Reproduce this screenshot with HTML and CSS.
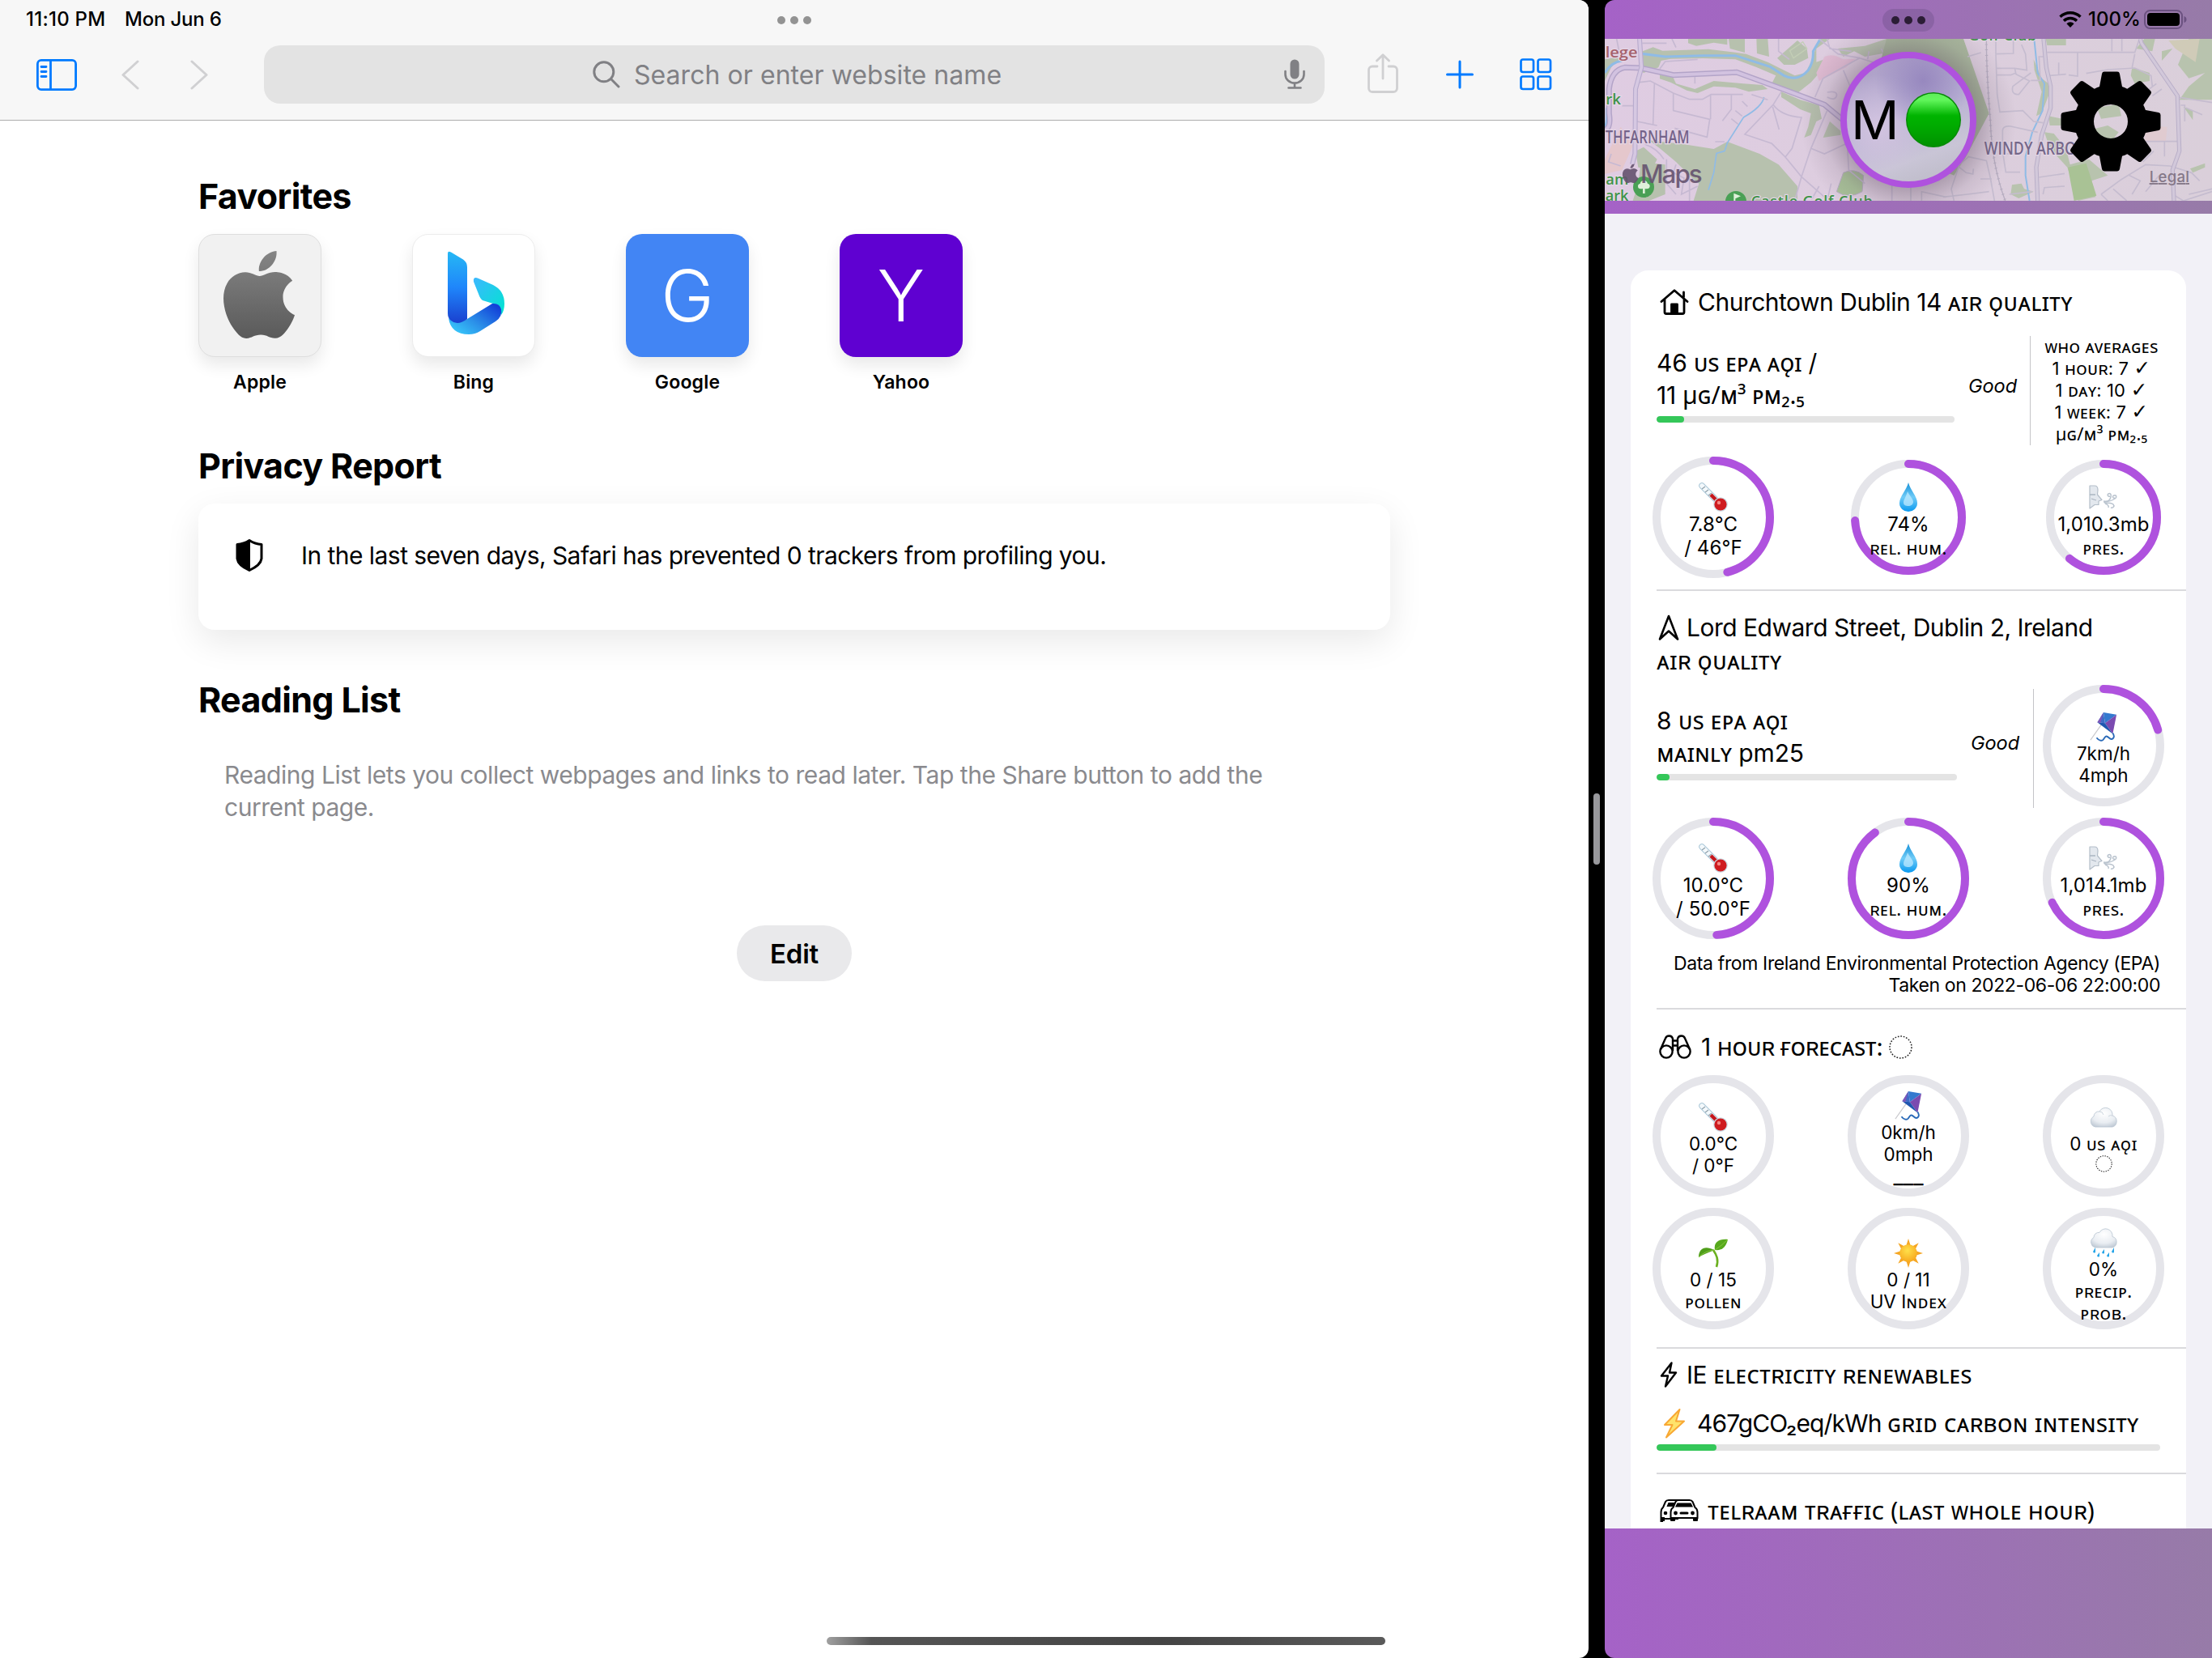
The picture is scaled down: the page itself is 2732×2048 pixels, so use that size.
FILE: index.html
```html
<!DOCTYPE html>
<html lang="en">
<head>
<meta charset="utf-8">
<title>Start Page</title>
<link rel="stylesheet" href="styles.css">
</head>
<body>
<svg class="defs" aria-hidden="true">
  <defs>
    <linearGradient id="appleGrey" x1="0" y1="0" x2="0" y2="1"><stop offset="0" stop-color="#858585"/><stop offset="1" stop-color="#5a5a5a"/></linearGradient>
    <linearGradient id="bingStem" x1="0" y1="0" x2="0" y2="1"><stop offset="0" stop-color="#26b8f4"/><stop offset=".5" stop-color="#1f86fb"/><stop offset="1" stop-color="#1a40cf"/></linearGradient>
    <linearGradient id="bingBase" x1="0" y1="1" x2="1" y2="0.2"><stop offset="0" stop-color="#3bd6ff"/><stop offset=".5" stop-color="#2b8fe8"/><stop offset="1" stop-color="#1240d8"/></linearGradient>
    <linearGradient id="bingTop" x1="0" y1="0" x2="1" y2="1"><stop offset="0" stop-color="#3cb8ff"/><stop offset="1" stop-color="#00e5cf"/></linearGradient>
    <linearGradient id="dropFill" x1="0" y1="0" x2="0" y2="1"><stop offset="0" stop-color="#1590d8"/><stop offset=".5" stop-color="#6fcbf7"/><stop offset="1" stop-color="#0a9af0"/></linearGradient>
    <radialGradient id="sunFill" cx=".45" cy=".35" r=".7"><stop offset="0" stop-color="#ffe04a"/><stop offset="1" stop-color="#f7a51c"/></radialGradient>
    <radialGradient id="cloudFill" cx=".5" cy=".3" r=".8"><stop offset="0" stop-color="#ffffff"/><stop offset=".6" stop-color="#e9edf2"/><stop offset="1" stop-color="#b9c4d0"/></radialGradient>
    <linearGradient id="greenBall" x1="0" y1="0" x2="0" y2="1"><stop offset="0" stop-color="#5fee5a"/><stop offset=".12" stop-color="#62f75c"/><stop offset=".42" stop-color="#00b400"/><stop offset=".6" stop-color="#00ac00"/><stop offset="1" stop-color="#009200"/></linearGradient>
    <linearGradient id="mapBase" x1="0" y1="0" x2="1" y2="0"><stop offset="0" stop-color="#dfcce2"/><stop offset="1" stop-color="#dacfda"/></linearGradient>
    <radialGradient id="pinShade"><stop offset=".62" stop-color="#5b4a5e" stop-opacity=".36"/><stop offset=".8" stop-color="#5b4a5e" stop-opacity=".12"/><stop offset="1" stop-color="#5b4a5e" stop-opacity="0"/></radialGradient>
  </defs>
  <symbol id="apple" viewBox="0 0 24 24"><path d="M12.152 6.896c-.948 0-2.415-1.078-3.96-1.04-2.04.027-3.91 1.183-4.961 3.014-2.117 3.675-.546 9.103 1.519 12.09 1.013 1.454 2.208 3.09 3.792 3.039 1.52-.065 2.09-.987 3.935-.987 1.831 0 2.35.987 3.96.948 1.637-.026 2.676-1.48 3.676-2.948 1.156-1.688 1.636-3.325 1.662-3.415-.039-.013-3.182-1.221-3.22-4.857-.026-3.04 2.48-4.494 2.597-4.559-1.429-2.09-3.623-2.324-4.39-2.376-2-.156-3.675 1.09-4.61 1.09zM15.53 3.83c.843-1.012 1.4-2.427 1.245-3.83-1.207.052-2.662.805-3.532 1.818-.78.896-1.454 2.338-1.273 3.714 1.338.104 2.715-.688 3.559-1.701"/></symbol>
  <symbol id="thermometer" viewBox="0 0 36 36">
    <path d="M4 4L20 20" stroke="#a9c7d8" stroke-width="7.5" stroke-linecap="round"/>
    <path d="M4 4L20 20" stroke="#f3f8fb" stroke-width="5.5" stroke-linecap="round"/>
    <path d="M4 8l4-3M8 12l4-3M12 16l4-3" stroke="#8fa0aa" stroke-width="1.2"/>
    <path d="M15 15L26 26" stroke="#c4161c" stroke-width="4.500"/>
    <circle cx="27" cy="27" r="8.800" fill="#c9d9e2"/><circle cx="27" cy="27" r="7.600" fill="#cf1c20"/><circle cx="25" cy="25" r="2.2" fill="#f58a86"/>
  </symbol>
  <symbol id="drop" viewBox="0 0 36 36"><path d="M18 0C20 9 29 17 29 25.500A11 10.500 0 0 1 7 25.500C7 17 16 9 18 0Z" fill="url(#dropFill)"/><path d="M17 11C15 18 12 21 12 25c0 3 3 4 6 4s6-2 6-5c0-4-5-8-7-13Z" fill="#bfeaff" opacity=".75"/></symbol>
  <symbol id="wind" viewBox="0 0 36 36">
    <path d="M1 4h6c3 0 4 2 4 5 0 2-.5 4-.5 6L16 21.500l-4 1.500V27.500H7L1 32Z" fill="#e3e8ee" stroke="#b4bec9" stroke-width="1.200" stroke-linejoin="round"/>
    <path d="M1 15h7M3 20l6 2" stroke="#aab5c1" stroke-width="1.300"/>
    <path d="M18 23c6 1 8-1 9-5s-1-5-3-4 0 4 2 3M18 24c8 0 11-2 14-4s2-5-1-4-1 4 1 3M19 25c6 0 9 0 11 2s0 5-3 4M20 26c3 1 5 3 4 5" fill="none" stroke="#b9c3ce" stroke-width="1.500"/>
  </symbol>
  <symbol id="kite" viewBox="0 0 36 38">
    <path d="M18 12L1 36" stroke="#c8c8cc" stroke-width="1.200"/>
    <path d="M18 0L35 3L20 14Z" fill="#3479cf"/><path d="M18 0L10 13L20 14Z" fill="#3f6bc7"/><path d="M35 3L30 28L20 14Z" fill="#7b4ab0"/><path d="M10 13L30 28L20 14Z" fill="#1f56b0"/><path d="M18 0L10 13L14 14Z" fill="#7f57b8"/>
    <path d="M30 27c4 6-1 10-5 6s-5-1-7 2-6 2-9-2" fill="none" stroke="#2a6ab8" stroke-width="2"/>
  </symbol>
  <symbol id="cloud" viewBox="0 0 36 26"><path d="M8 25a7 7 0 0 1-2-13 6 6 0 0 1 7-6 8.500 8.500 0 0 1 16 5 7.300 7.300 0 0 1 0 14Z" fill="url(#cloudFill)" stroke="#b8c4d0" stroke-width=".8"/><path d="M13 6q4 0 5 4M29 11q-3-1-5 1" stroke="#ccd5de" fill="none"/></symbol>
  <symbol id="seedling" viewBox="0 0 36 36"><path d="M22 35C25 26 22 20 18 14" stroke="#6bb01f" stroke-width="2.600" fill="none"/><path d="M0 23C0 12 8 8 19 14C14 17 8 18 0 23Z" fill="#4f9e1a"/><path d="M20 14C18 4 26 0 36 1C34 10 29 15 20 14Z" fill="#57a91d"/><path d="M20 14Q28 9 36 1M0 23Q8 15 19 14" stroke="#86c63c" fill="none"/></symbol>
  <symbol id="sun" viewBox="0 0 36 36"><path d="M18 0l2.500 8h-5ZM18 36l2.500-8h-5ZM0 18l8-2.500v5ZM36 18l-8-2.500v5ZM5.300 5.300l7.400 3.900-3.500 3.500ZM30.700 5.300l-7.400 3.900 3.500 3.500ZM5.300 30.700l7.400-3.900-3.500-3.500ZM30.700 30.700l-7.400-3.900 3.500-3.500Z" fill="#f5a623"/><circle cx="18" cy="18" r="10.800" fill="url(#sunFill)"/></symbol>
  <symbol id="rain" viewBox="0 0 36 36"><path d="M8 24a6.800 6.800 0 0 1-2-12.500 6 6 0 0 1 7-6 8.500 8.500 0 0 1 16 5 7 7 0 0 1 0 13.500Z" fill="url(#cloudFill)" stroke="#b8c4d0" stroke-width=".8"/><path d="M8 24l-3 5a2 2 0 0 0 3 1ZM19 26l-3 4a2 2 0 0 0 3 1ZM31 24l-3 5a2 2 0 0 0 3 1ZM13 30l-3 4a2 2 0 0 0 3 1ZM25 30l-3 4a2 2 0 0 0 3 1Z" fill="#27a5e8"/></symbol>
</svg>

<div class="screen">
  <main class="safari">
    <header class="chrome">
      <div class="status">
        <span class="time">11:10 PM</span><span class="date">Mon Jun 6</span>
        <span class="dots"><i></i><i></i><i></i></span>
      </div>
      <div class="toolbar">
        <svg class="i-sidebar" width="50" height="39" viewBox="0 0 50 39" fill="none" stroke="#007aff" stroke-width="2.800"><rect x="1.400" y="1.400" width="47.200" height="36.200" rx="4.500"/><path d="M17.500 2v35M6 9.500h6M6 15.500h6M6 21.500h6" stroke-linecap="round"/></svg>
        <svg class="i-back" width="22" height="37" viewBox="0 0 22 37" fill="none" stroke="#d0d0d2" stroke-width="3" stroke-linecap="round" stroke-linejoin="round"><path d="M20 2L2 18.500L20 35"/></svg>
        <svg class="i-fwd" width="22" height="37" viewBox="0 0 22 37" fill="none" stroke="#d0d0d2" stroke-width="3" stroke-linecap="round" stroke-linejoin="round"><path d="M2 2L20 18.500L2 35"/></svg>
        <div class="search">
          <svg width="34" height="34" viewBox="0 0 34 34" fill="none" stroke="#808084" stroke-width="3" stroke-linecap="round"><circle cx="13.800" cy="13.800" r="12"/><path d="M22.800 22.800L32 32"/></svg>
          <span class="placeholder">Search or enter website name</span>
          <svg class="mic" width="26" height="37" viewBox="0 0 26 37" fill="none" stroke="#808084" stroke-width="2.600" stroke-linecap="round"><rect x="7.500" y=".5" width="11" height="24" rx="5.500" fill="#808084" stroke="none"/><path d="M1.500 15v4a11.500 10.500 0 0 0 23 0v-4M13 30v5M5.500 35.500h15"/></svg>
        </div>
        <svg class="i-share" width="38" height="50" viewBox="0 0 38 50" fill="none" stroke="#d0d0d2" stroke-width="2.800" stroke-linecap="round" stroke-linejoin="round"><path d="M12 16H6a4.500 4.500 0 0 0-4.500 4.500V43A4.500 4.500 0 0 0 6 47.500H32A4.500 4.500 0 0 0 36.500 43V20.500A4.500 4.500 0 0 0 32 16H26M19 31V2M11.500 9L19 1.800L26.500 9"/></svg>
        <svg class="i-plus" width="34" height="36" viewBox="0 0 34 36" stroke="#007aff" stroke-width="3" stroke-linecap="round"><path d="M17 2v32M1.500 18h31"/></svg>
        <svg class="i-grid" width="40" height="40" viewBox="0 0 40 40" fill="none" stroke="#007aff" stroke-width="2.700"><rect x="1.500" y="1.500" width="15.500" height="15.500" rx="2.500"/><rect x="22.500" y="1.500" width="15.500" height="15.500" rx="2.500"/><rect x="1.500" y="22.500" width="15.500" height="15.500" rx="2.500"/><rect x="22.500" y="22.500" width="15.500" height="15.500" rx="2.500"/></svg>
      </div>
    </header>

    <section class="start">
      <h2>Favorites</h2>
      <div class="tiles">
        <div class="tile"><div class="face face-apple"><svg width="108" height="108" fill="url(#appleGrey)"><use href="#apple"/></svg></div><span>Apple</span></div>
        <div class="tile"><div class="face face-bing"><svg width="152" height="152" viewBox="0 0 152 152"><path d="M76 59Q75 52 82 55L100 63Q114 70 114 86Q114 95 110 100Q111 90 100 86L87 82Q84 80 82 74Z" fill="url(#bingTop)"/><path d="M45 104Q48 124 70 124Q78 124 84 120L103 108Q112 102 110 93Q108 85 99 86L68 105Q56 112 45 104Z" fill="url(#bingBase)"/><path d="M44 24Q44 20.500 48 22.500L63 31.500Q68 35 68 41V105Q56 114 48 107Q44 104 44 98Z" fill="url(#bingStem)"/></svg></div><span>Bing</span></div>
        <div class="tile"><div class="face face-google">G</div><span>Google</span></div>
        <div class="tile"><div class="face face-yahoo">Y</div><span>Yahoo</span></div>
      </div>
      <h2 class="h-privacy">Privacy Report</h2>
      <div class="privacy">
        <svg width="34" height="40" viewBox="0 0 34 40"><path d="M17 1.500Q24 6 32 6.500V24Q31 32 17 38.500Q3 32 2 24V6.500Q10 6 17 1.500Z" fill="#fff" stroke="#000" stroke-width="3" stroke-linejoin="round"/><path d="M18 1.500Q10 6 2 6.500V24Q3 32 18 38.500Z"/></svg>
        <p>In the last seven days, Safari has prevented 0 trackers from profiling you.</p>
      </div>
      <h2 class="h-reading">Reading List</h2>
      <p class="reading">Reading List lets you collect webpages and links to read later. Tap the Share button to add the<br>current page.</p>
      <button class="edit">Edit</button>
    </section>
  </main>

  <div class="divider"><i></i></div>

  <aside class="app">
    <div class="bar">
      <span class="pill"><i></i><i></i><i></i></span>
      <svg class="wifi" width="28" height="20" viewBox="0 0 28 20" fill="none" stroke="#000" stroke-width="3.400"><path d="M1.500 6.800a18 18 0 0 1 25 0M6 11.800a11.500 11.500 0 0 1 16 0"/><path d="M14 20l-4.600-4.800a6.500 6.500 0 0 1 9.200 0Z" fill="#000" stroke="none"/></svg>
      <span class="pct">100%</span>
      <svg class="battery" width="53" height="24" viewBox="0 0 53 24"><rect x="1" y="1" width="46" height="22" rx="6.500" fill="none" stroke="#6b5180" stroke-width="2"/><rect x="4" y="4" width="40" height="16" rx="4"/><path d="M49.500 8v8q3-1 3-4t-3-4Z" fill="#6b5180"/></svg>
    </div>

    <div class="map">
      <svg class="tilemap" width="750" height="200" viewBox="0 0 2250 600" font-family="'Open Sans', 'Noto Sans', sans-serif">
        <rect width="2250" height="600" fill="url(#mapBase)"/>
        <g transform="translate(-36,-24)">
          <g fill="#b7c1ae">
            <path d="M36 100L80 92L100 90L60 130L36 180ZM170 72L215 55L250 68L420 62L520 74L560 80L640 110L700 140L740 160L780 150L800 110L830 24H870L820 60V110L850 100L840 140L800 185L750 225L655 190L670 160L600 130L520 100L400 96L280 98L245 105L235 130L180 150L165 140Z"/>
            <path d="M240 150L290 168L300 190L370 210L440 180L550 190L620 195L640 210L570 220L520 205L440 200L380 225L340 215L280 185L240 172ZM690 220L760 250L830 270L840 320L820 330L800 380L775 390L790 350L800 300L760 285L690 240Z"/>
            <path d="M495 24H555V75L500 60ZM598 24H640L645 90L600 78ZM345 24H490V46L440 38L375 50L345 40ZM675 95L750 30L785 60L790 95L740 120L700 120Z"/>
            <path d="M200 400L330 415L440 432L490 405L610 450L680 490L750 570V624H365L385 560L360 540L300 480L240 430ZM150 440L180 425L230 470L210 510L160 500ZM900 60L1000 50L1080 24H1170V60L1000 90L960 70L920 90ZM845 390L870 330L910 365V380ZM170 480L260 490V600L200 624H140L160 560Z"/>
          </g>
          <path d="M895 590L920 520Q960 500 995 530L990 590Q940 620 895 590Z" fill="#a9c299" stroke="#b9aec6" stroke-width="3"/>
          <path d="M820 150L850 90Q880 75 920 100L965 98L930 130L830 180Z" fill="#e0bcd3"/>
          <path d="M95 350L140 420L100 510L36 525V470Z" fill="#e5c7cc"/>
          <path d="M722 68L770 35L785 60L735 95Z" fill="none" stroke="#c3ceb6" stroke-width="4"/>
          <g fill="none" stroke="#8fbbe6" stroke-width="9"><path d="M165 78L260 90L400 86H520L650 128L700 160Q750 185 790 140Q810 110 808 70L835 24"/><path d="M36 150Q60 110 100 105M44 280V310Q44 340 36 350"/></g>
          <path d="M626 240Q620 275 550 315L490 410L480 440L450 448L440 520L420 584" fill="none" stroke="#8fbbe6" stroke-width="5"/>
          <g fill="none" stroke="#c6b9d2" stroke-width="5">
            <path d="M165 185L205 180L290 225L350 248H398L430 230H548M220 190L215 340M290 225V290L425 322L415 388L295 355M428 230V322M505 230V285L472 328M370 160V190M155 330L230 345M100 272H150"/>
            <path d="M690 220L660 268L555 378L655 412L705 462L765 535L850 610M660 268Q690 310 765 315L730 430L705 462M658 275L682 360M845 170L815 240M860 290L800 430L765 535L740 624M800 430L850 450L935 410M845 170L980 95L1060 120M920 140L945 200M875 560L860 624M860 222Q900 215 895 235T860 240M1100 560V624"/>
            <path d="M830 24L900 80L980 95M175 40H265M80 24L90 75M285 24L300 56M680 24V70L720 100M580 230L640 250M545 255L565 275M520 290L545 310M505 320L530 340M445 405H480M60 450L50 480L95 495M265 470V560L300 600M300 490L290 520L330 540L320 600L380 570M350 530V624M185 415Q230 430 255 470M240 135L260 108L380 100M1015 70L1010 100M1060 60L1080 100M860 24L870 60L950 70M935 420L940 510L1000 560M800 624L830 570"/>
          </g>
          <g fill="none"><path d="M40 360Q60 350 52 300V210Q60 140 110 130L170 132L290 158L525 148L690 208L850 268L925 330" stroke="#b3a4c8" stroke-width="21"/><path d="M40 360Q60 350 52 300V210Q60 140 110 130L170 132L290 158L525 148L690 208L850 268L925 330" stroke="#d2c2e0" stroke-width="12"/>
          <path d="M165 24L172 130L150 210L148 450L138 490" stroke="#b9acce" stroke-width="18"/><path d="M165 24L172 130L150 210L148 450L138 490" stroke="#d6c8e2" stroke-width="11"/></g>
          <g fill="#4aa055"><circle cx="180" cy="573" r="39"/><circle cx="522" cy="627" r="39"/></g>
          <path d="M177 597v-18q-18 4-18-9 0-8 8-9 2-12 14-12t14 11q9 2 8 10-1 12-18 9v18Z" fill="#dff0da"/><path d="M514 630v-34l26 11-20 9v14Z" fill="#dff0da"/>
        </g>
        <g transform="translate(1104,-24)">
          <path d="M0 24H225L320 300L235 460L190 530L120 500L60 300L-80 100L-60 24Z" fill="#aab99e"/>
          <g fill="#b8c3ae"><path d="M530 24H605V48H535ZM485 100L515 170L540 190V235L515 300L495 310L515 220L488 140ZM895 24H935L925 70L865 60ZM850 130L915 150V180L860 190L845 160ZM1060 24H1146V250H1025L1060 200L1120 150L1060 170L1020 120ZM960 70L1000 60L960 105ZM720 280L800 265L810 310L735 320ZM700 360L760 345L800 370L780 395H710ZM525 370L560 375L605 430L620 490L690 470L760 530L700 550L715 610L650 624L610 500L545 430ZM405 565L440 560L450 580L485 590L430 615L400 600ZM1065 505L1120 485V500L1075 520ZM540 310L590 320V345H545ZM1040 275L1075 290V325Z"/></g>
          <path d="M985 30L1100 24L1085 110L1010 60Z" fill="#d0cbb8"/><path d="M900 345L980 350L975 403H895Z" fill="#e0cbd0"/><path d="M612 500L680 485L718 605L635 624Z" fill="#a9c295"/>
          <path d="M487 24L500 150L525 190L518 290L480 370L455 460V530L470 624" fill="none" stroke="#8fbbe6" stroke-width="6"/>
          <g fill="none" stroke="#c5bccf" stroke-width="5">
            <path d="M345 24V80L350 230L360 295L445 290L485 330L520 335M345 80L410 78V24M345 133H415L420 155L470 180L430 230Q400 230 408 200L475 150M415 133L460 140L455 80L440 45M345 158H400L420 150M475 178H510L505 90H525M535 74H860L875 30M775 24V70M812 24V70M648 75V162L615 158M545 160L605 155M578 112V158M680 152L760 138L860 132L920 160L925 200M860 80L850 130"/>
            <path d="M370 365Q370 345 400 348L500 370M370 365V440L382 518H435M385 450H440M240 460L310 475L325 540L340 624M288 543H330M505 537L600 523M520 600L525 575L600 570M735 600L810 545L900 490L990 495L1070 520L1100 550M780 580L830 624M840 530L880 550L850 600M900 590L950 530M820 404H1020M970 404V460M930 440L890 480M1060 600L1146 580M1020 240L1146 260M1050 280L1110 305M1030 270H1045V330M210 500L235 520L260 525L262 505M190 624L180 580L210 490L245 460M70 624V590L160 610M30 570V624M240 90L290 75M235 230L260 290M150 610L240 600L320 590M395 600L480 590M735 600L760 624M1000 600L1040 624L1146 590M900 220L940 190M925 235L960 210"/>
          </g>
          <path d="M310 24Q310 150 325 330Q330 490 380 624" fill="none" stroke="#b6adc0" stroke-width="4"/><path d="M310 24Q310 150 325 330Q330 490 380 624" fill="none" stroke="#b6adc0" stroke-width="10" stroke-dasharray="3 17"/>
          <g fill="none"><path d="M522 24L532 130L548 200V280L515 380L495 500L500 624M880 24L885 40L1018 235L1025 440L1000 510L1005 624" stroke="#b9afc8" stroke-width="16"/><path d="M522 24L532 130L548 200V280L515 380L495 500L500 624M880 24L885 40L1018 235L1025 440L1000 510L1005 624" stroke="#d2c8da" stroke-width="10"/></g>
        </g>
        <g stroke="#e4d6e6" stroke-width="7" paint-order="stroke" font-weight="600" font-size="54">
          <text x="2" y="70" fill="#a5616c" textLength="120" lengthAdjust="spacingAndGlyphs">lege</text>
          <text x="4" y="243" fill="#3f9348" textLength="56" lengthAdjust="spacingAndGlyphs">rk</text>
          <text x="4" y="540" fill="#3f9348" textLength="84" lengthAdjust="spacingAndGlyphs">am</text>
          <text x="2" y="600" fill="#3f9348" textLength="86" lengthAdjust="spacingAndGlyphs">ark</text>
          <text x="542" y="622" fill="#3f9348" textLength="450">Castle Golf Club</text>
          <text x="1348" y="6" fill="#3f9348" textLength="252">Golf Club</text>
          <text x="2" y="387" fill="#75638a" textLength="312" lengthAdjust="spacingAndGlyphs" font-size="65">THFARNHAM</text>
          <text x="1406" y="430" fill="#75688a" textLength="374" lengthAdjust="spacingAndGlyphs" font-size="65">WINDY ARBOR</text>
        </g>
        <g fill="#66536f" opacity=".9"><svg x="59" y="463" width="72" height="72"><use href="#apple"/></svg><text x="132" y="534" font-family="Inter, sans-serif" font-size="94" font-weight="500" textLength="230">Maps</text></g>
        <text x="2018" y="531" fill="#857888" font-family="Inter, sans-serif" font-size="56" font-weight="500" textLength="148" text-decoration="underline">Legal</text>
        <circle cx="1125" cy="303" r="400" fill="url(#pinShade)"/>
      </svg>
      <div class="pin">
        <span>M</span>
        <svg width="68" height="68" viewBox="0 0 68 68"><circle cx="34" cy="34" r="34" fill="#078a07"/><circle cx="34" cy="34" r="32.500" fill="url(#greenBall)"/></svg>
      </div>
      <svg class="gear" width="124" height="124" viewBox="-62 -62 124 124">
        <circle r="33" fill="none" stroke="#000" stroke-width="24"/>
        <g stroke="#000" stroke-width="6" stroke-linejoin="round">
          <path id="tooth" d="M-11.500-40L-8-58.500H8L11.500-40Z"/>
          <use href="#tooth" transform="rotate(45)"/><use href="#tooth" transform="rotate(90)"/><use href="#tooth" transform="rotate(135)"/><use href="#tooth" transform="rotate(180)"/><use href="#tooth" transform="rotate(225)"/><use href="#tooth" transform="rotate(270)"/><use href="#tooth" transform="rotate(315)"/>
        </g>
      </svg>
    </div>
    <div class="strip"></div>

    <div class="scroll">
      <div class="card">
        <section class="home">
          <h3><svg class="i-house" width="36" height="32" viewBox="0 0 36 32" fill="none" stroke="#000" stroke-width="2.800" stroke-linejoin="round" stroke-linecap="round"><path d="M2 15.500L18 1.800L34 15.500M6 13V28.500a2 2 0 0 0 2 2H28a2 2 0 0 0 2-2V13M29.500 10V4"/><path d="M14.500 19h7v11h-7Z" fill="#000"/></svg><span class="t-home">Churchtown Dublin 14 <b class="sc">ᴀɪʀ ǫᴜᴀʟɪᴛʏ</b></span></h3>
          <div class="aqi">
            <div class="reading-box">
              <p>46 <b class="sc">ᴜs ᴇᴘᴀ ᴀǫɪ</b> /</p>
              <p>11 <b class="sc">µɢ/ᴍ³ ᴘᴍ₂.₅</b></p>
              <div class="meter"><i style="width:34px"></i></div>
            </div>
            <em>Good</em>
            <div class="who">
              <p><b class="sc">ᴡʜᴏ ᴀᴠᴇʀᴀɢᴇs</b></p>
              <p>1 <b class="sc">ʜᴏᴜʀ</b>: 7 <b class="ck">✓</b></p>
              <p>1 <b class="sc">ᴅᴀʏ</b>: 10 <b class="ck">✓</b></p>
              <p>1 <b class="sc">ᴡᴇᴇᴋ</b>: 7 <b class="ck">✓</b></p>
              <p><b class="sc">µɢ/ᴍ³ ᴘᴍ₂.₅</b></p>
            </div>
          </div>
          <div class="gauges">
            <div class="gauge g-std"><svg class="ring" viewBox="-75 -75 150 150"><circle r="70"/><circle class="val" r="70" pathLength="100" stroke-dasharray="46 100"/></svg><svg class="emo"><use href="#thermometer"/></svg><p>7.8°C</p><p>/ 46°F</p></div>
            <div class="gauge g-std"><svg class="ring" viewBox="-75 -75 150 150"><circle r="66"/><circle class="val" r="66" pathLength="100" stroke-dasharray="74 100"/></svg><svg class="emo"><use href="#drop"/></svg><p>74%</p><p><b class="sc">ʀᴇʟ. ʜᴜᴍ.</b></p></div>
            <div class="gauge g-std"><svg class="ring" viewBox="-75 -75 150 150"><circle r="66"/><circle class="val" r="66" pathLength="100" stroke-dasharray="61 100"/></svg><svg class="emo"><use href="#wind"/></svg><p>1,010.3mb</p><p><b class="sc">ᴘʀᴇs.</b></p></div>
          </div>
        </section>

        <section class="city">
          <h3><svg class="i-arrow" width="26" height="34" viewBox="0 0 26 34" fill="none" stroke="#000" stroke-width="2.600" stroke-linejoin="round"><path d="M13 3L24 31.500L13 21.500L2 31.500Z"/></svg><span class="t-city">Lord Edward Street, Dublin 2, Ireland</span></h3>
          <p class="sub"><b class="sc">ᴀɪʀ ǫᴜᴀʟɪᴛʏ</b></p>
          <div class="aqi">
            <div class="reading-box">
              <p>8 <b class="sc">ᴜs ᴇᴘᴀ ᴀǫɪ</b></p>
              <p><b class="sc">ᴍᴀɪɴʟʏ</b> pm25</p>
              <div class="meter"><i style="width:16px"></i></div>
            </div>
            <em>Good</em>
            <div class="windbox">
              <div class="gauge g-tight"><svg class="ring" viewBox="-75 -75 150 150"><circle r="70"/><circle class="val" r="70" pathLength="100" stroke-dasharray="20.500 100"/></svg><svg class="emo"><use href="#kite"/></svg><p>7km/h</p><p>4mph</p></div>
            </div>
          </div>
          <div class="gauges">
            <div class="gauge g-std"><svg class="ring" viewBox="-75 -75 150 150"><circle r="70"/><circle class="val" r="70" pathLength="100" stroke-dasharray="49 100"/></svg><svg class="emo"><use href="#thermometer"/></svg><p>10.0°C</p><p>/ 50.0°F</p></div>
            <div class="gauge g-std"><svg class="ring" viewBox="-75 -75 150 150"><circle r="70"/><circle class="val" r="70" pathLength="100" stroke-dasharray="90 100"/></svg><svg class="emo"><use href="#drop"/></svg><p>90%</p><p><b class="sc">ʀᴇʟ. ʜᴜᴍ.</b></p></div>
            <div class="gauge g-std"><svg class="ring" viewBox="-75 -75 150 150"><circle r="70"/><circle class="val" r="70" pathLength="100" stroke-dasharray="68 100"/></svg><svg class="emo"><use href="#wind"/></svg><p>1,014.1mb</p><p><b class="sc">ᴘʀᴇs.</b></p></div>
          </div>
          <p class="source">Data from Ireland Environmental Protection Agency (EPA)<br><span>Taken on 2022-06-06 22:00:00</span></p>
        </section>

        <section class="forecast">
          <h3><svg class="i-bino" width="40" height="30" viewBox="0 0 40 30" fill="none" stroke="#000" stroke-width="2.400" stroke-linejoin="round"><circle cx="9" cy="21" r="7.600"/><circle cx="31" cy="21" r="7.600"/><path d="M1.800 18.500L8 4.500Q9 1.500 12.500 1.500T17 5V20M38.200 18.500L32 4.500Q31 1.500 27.500 1.500T23 5V20M17 7.500h6M17 13.500h6"/></svg><span class="t-fore">1 <b class="sc">ʜᴏᴜʀ ғᴏʀᴇᴄᴀsᴛ</b>:</span><svg class="dotted" width="29" height="29" viewBox="0 0 29 29"><circle cx="14.500" cy="14.500" r="13.500" fill="none" stroke="#222" stroke-width="1.500" stroke-dasharray="1.700 1.800"/></svg></h3>
          <div class="gauges">
            <div class="gauge g-tight"><svg class="ring" viewBox="-75 -75 150 150"><circle r="70"/></svg><svg class="emo"><use href="#thermometer"/></svg><p>0.0°C</p><p>/ 0°F</p></div>
            <div class="gauge g-tight g-high"><svg class="ring" viewBox="-75 -75 150 150"><circle r="70"/></svg><svg class="emo"><use href="#kite"/></svg><p>0km/h</p><p>0mph</p><p class="rule">___</p></div>
            <div class="gauge g-tight"><svg class="ring" viewBox="-75 -75 150 150"><circle r="70"/></svg><svg class="emo"><use href="#cloud"/></svg><p>0 <b class="sc">ᴜs ᴀǫɪ</b></p><svg class="dot-small" width="21" height="21" viewBox="0 0 21 21"><circle cx="10.500" cy="10.500" r="9.700" fill="none" stroke="#222" stroke-width="1.100" stroke-dasharray="1.400 1.500"/></svg></div>
          </div>
          <div class="gauges second">
            <div class="gauge g-tight g-low"><svg class="ring" viewBox="-75 -75 150 150"><circle r="70"/></svg><svg class="emo"><use href="#seedling"/></svg><p>0 / 15</p><p><b class="sc">ᴘᴏʟʟᴇɴ</b></p></div>
            <div class="gauge g-tight g-low"><svg class="ring" viewBox="-75 -75 150 150"><circle r="70"/></svg><svg class="emo"><use href="#sun"/></svg><p>0 / 11</p><p>UV I<b class="sc">ɴᴅᴇx</b></p></div>
            <div class="gauge g-tight g-rain"><svg class="ring" viewBox="-75 -75 150 150"><circle r="70"/></svg><svg class="emo"><use href="#rain"/></svg><p>0%</p><p><b class="sc">ᴘʀᴇᴄɪᴘ.</b></p><p><b class="sc">ᴘʀᴏʙ.</b></p></div>
          </div>
        </section>

        <section class="grid-power">
          <h3><svg class="i-bolt" width="22" height="34" viewBox="0 0 22 34" fill="none" stroke="#000" stroke-width="2.400" stroke-linejoin="round"><path d="M14.500 2.500L2 18.500H10L7 31.500L20 14.500H12Z"/></svg><span class="t-ie">IE <b class="sc">ᴇʟᴇᴄᴛʀɪᴄɪᴛʏ ʀᴇɴᴇᴡᴀʙʟᴇs</b></span></h3>
          <h3 class="carbon"><svg class="i-zap" width="30" height="38" viewBox="0 0 30 38" fill="#ffe36b" stroke="#f8a834" stroke-width="2" stroke-linejoin="round"><path d="M21.500 2L3 21H12.500L5 36.500L27 16.500H17Z"/></svg><span class="t-co2">467gCO₂eq/kWh <b class="sc">ɢʀɪᴅ ᴄᴀʀʙᴏɴ ɪɴᴛᴇɴsɪᴛʏ</b></span></h3>
          <div class="meter"><i style="width:74px"></i></div>
        </section>

        <section class="traffic">
          <h3><svg class="i-cars" width="48" height="28" viewBox="0 0 48 28"><path d="M4 10L7 3Q8 1 11 1H22V24H3V28H1.500V16Q1.500 12 4 10Z" fill="#fff" stroke="#000" stroke-width="2"/><path d="M8.500 9L10.500 4H20V9Z"/><circle cx="7" cy="17" r="2.300"/><path d="M16.500 10L19.500 3Q20.500 1 23.500 1H36.500Q39.500 1 40.500 3L43.500 10Q46.500 12 46.500 16V23H13.500V16Q13.500 12 16.500 10Z" fill="#fff" stroke="#000" stroke-width="2"/><path d="M19 9.500L21.500 4.500H38.500L41 9.500ZM1 22H6V27H2Q1 27 1 26ZM13 22H19V26Q19 27 18 27H14Q13 27 13 26ZM41 22H47V26Q47 27 46 27H42Q41 27 41 26Z"/><circle cx="19.500" cy="17" r="2.400"/><circle cx="40.500" cy="17" r="2.400"/><rect x="24.500" y="15.500" width="11" height="3" rx="1.500"/></svg><span class="t-tel"><b class="sc">ᴛᴇʟʀᴀᴀᴍ ᴛʀᴀғғɪᴄ (ʟᴀsᴛ ᴡʜᴏʟᴇ ʜᴏᴜʀ)</b></span></h3>
        </section>
      </div>
    </div>
    <footer class="foot"></footer>
  </aside>
  <i class="home-bar"></i>
</div>
</body>
</html>
```
FILE: styles.css
```css
* { box-sizing: border-box; margin: 0; padding: 0; }
body { font-family: Inter, "Noto Sans", sans-serif; color: #000; background: #000; }
svg { display: block; flex: none; }
.defs { position: absolute; width: 0; height: 0; }
.screen { position: relative; display: flex; width: 2732px; height: 2048px; background: #000; overflow: hidden; }

/* Browser pane */
.safari { width: 1962px; background: #fff; border-radius: 0 12px 12px 0; overflow: hidden; }
.chrome { height: 149px; background: #f7f7f7; border-bottom: 1px solid #adadad; }
.status { position: relative; height: 48px; padding: 0 0 1px 32px; display: flex; align-items: center; font-size: 24px; font-weight: 500; letter-spacing: -.2px; }
.time { width: 122px; letter-spacing: .25px; }
.dots, .pill { display: flex; gap: 6px; }
.dots i { width: 10px; height: 10px; border-radius: 50%; background: #939393; }
.dots { position: absolute; left: 960px; top: 20px; }
.toolbar { display: flex; align-items: center; height: 88px; padding-left: 45px; }
.i-back { margin-left: 55px; }
.i-fwd { margin-left: 63px; }
.search { position: relative; display: flex; align-items: center; width: 1310px; height: 72px; margin-left: 69px; padding-left: 406px; border-radius: 20px; background: #e3e3e3; }
.placeholder { margin-left: 17px; font-size: 32px; letter-spacing: .05px; color: #808084; }
.mic { position: absolute; right: 24px; top: 17px; }
.i-share { margin-left: 53px; margin-top: -3px; }
.i-plus { margin-left: 59px; }
.i-grid { margin-left: 57px; }

.start { padding: 61px 0 0 245px; }
h2 { font-size: 43px; line-height: 64px; font-weight: 700; letter-spacing: -.65px; }
.tiles { display: flex; gap: 112px; margin-top: 15px; }
.tile { width: 152px; text-align: center; font-size: 23px; font-weight: 600; letter-spacing: .2px; }
.tile span { display: block; margin-top: 16px; line-height: 30px; }
.face { display: flex; align-items: center; justify-content: center; width: 152px; height: 152px; border-radius: 20px; overflow: hidden; box-shadow: 0 10px 20px rgba(0,0,0,.09); color: #fff; font-size: 88px; font-weight: 300; }
.face-apple { padding: 0 2px 3px 0; background: #f1f1f1; border: 1px solid #dedede; }
.face-bing { background: #fff; border: 1px solid #ececec; }
.face-google { background: #4285f4; }
.face-yahoo { background: #5f01d1; }
.h-privacy { margin-top: 56px; }
.privacy { display: flex; width: 1472px; height: 156px; margin-top: 15px; padding: 44px 46px; border-radius: 20px; background: #fff; box-shadow: 0 14px 44px rgba(0,0,0,.09); }
.privacy p { margin-left: 47px; font-size: 30px; line-height: 40px; letter-spacing: -.55px; white-space: nowrap; }
.h-reading { margin-top: 54px; }
.reading { margin: 41px 0 0 32px; font-size: 30px; line-height: 40px; color: #8a8a8e; letter-spacing: -.46px; white-space: nowrap; }
.edit { display: block; margin: 126px 0 0 665px; width: 142px; height: 69px; border: 0; border-radius: 35px; background: #e9e9eb; font: 600 33px Inter, sans-serif; letter-spacing: -.2px; color: #000; }

.divider { display: flex; align-items: center; justify-content: center; width: 20px; }
.divider i { width: 8px; height: 88px; border-radius: 4px; background: #98989c; }
.home-bar { position: absolute; left: 1021px; top: 2022px; width: 690px; height: 10px; border-radius: 5px; background: linear-gradient(90deg, #a0a0a0, #555 8%, #444 60%, #5a5a5a); }

/* App pane */
.app { display: flex; flex-direction: column; width: 750px; border-radius: 12px 0 0 12px; overflow: hidden; background: linear-gradient(90deg, #a562c7, #977ba8); }
.bar { position: relative; display: flex; align-items: center; height: 48px; padding-left: 561px; }
.pill { position: absolute; left: 343px; top: 11px; width: 64px; height: 28px; border-radius: 14px; align-items: center; justify-content: center; background: rgba(90,70,120,.28); }
.pill i { width: 10px; height: 10px; border-radius: 50%; background: #2b1d35; }
.pct { width: 66px; margin: -1px 0 0 8px; font-size: 24px; font-weight: 500; letter-spacing: 0; }
.battery { margin-left: 3px; }
.map { position: relative; height: 200px; }
.pin { position: absolute; left: 291px; top: 16px; display: flex; align-items: center; gap: 17px; width: 168px; height: 168px; padding-left: 5px; border: 8px solid #af52de; border-radius: 50%; font-size: 66px;
  background: radial-gradient(circle at 62% 18%, #9788bf 0, rgba(151,136,191,0) 38%), radial-gradient(circle at 25% 55%, #d3c4e0 0, rgba(211,196,224,0) 45%), linear-gradient(160deg, #ab9cc4, #b8b0d4 45%, #c9c5d6 75%, #bab8c4); }
.pin span { width: 51px; letter-spacing: -2px; }
.gear { position: absolute; left: 563px; top: 40px; }
.strip { height: 16px; }
.scroll { height: 1624px; padding: 70px 32px 0; background: #f2f1f7; overflow: hidden; }
.foot { flex: 1; }
.card { height: 1700px; padding-left: 32px; border-radius: 22px; background: #fff; }
.card section { border-bottom: 2px solid #dadadd; }
.card .traffic { border-bottom: 0; }

.sc { font-family: "Noto Sans", sans-serif; font-weight: 400; line-height: 1; }
.ck { font-family: "DejaVu Sans", sans-serif; font-weight: 400; line-height: 1; font-size: 25px; }
h3 { display: flex; align-items: center; height: 40px; font-size: 30px; line-height: 42px; font-weight: 400; letter-spacing: -.5px; white-space: nowrap; }
h3 .sc { letter-spacing: .1px; }
.sub { font-size: 30px; line-height: 42px; height: 40px; letter-spacing: .15px; }
.aqi { display: flex; width: 622px; }
.aqi > * { flex: none; }
.reading-box p { font-size: 30px; line-height: 40px; height: 40px; white-space: nowrap; }
.meter { height: 8px; margin-top: 6px; border-radius: 4px; background: #e4e4e4; overflow: hidden; }
.meter i { display: block; height: 8px; border-radius: 4px; background: #34c759; }
em { font-size: 23.5px; line-height: 32px; }

.gauges { display: flex; justify-content: space-between; width: 632px; margin-left: -5px; }
.gauge { position: relative; display: flex; flex-direction: column; align-items: center; width: 150px; height: 150px; white-space: nowrap; }
.gauge > * { position: relative; }
.gauge .ring { position: absolute; inset: 0; width: 150px; height: 150px; fill: none; stroke: #e5e5ea; stroke-width: 10; }
.gauge .val { stroke: #af52de; stroke-linecap: round; transform: rotate(-90deg); }
.emo { width: 36px; height: 36px; }
.gauge .sc { font-size: 22px; letter-spacing: .3px; }
.g-std { padding-top: 32px; font-size: 24px; letter-spacing: .1px; }
.g-std .emo { margin-bottom: 1px; }
.g-std p { line-height: 29px; height: 29px; }
.g-tight { padding-top: 34px; font-size: 22.5px; }
.g-tight .emo { margin-bottom: 1px; }
.g-tight p { line-height: 27px; height: 27px; }
.g-high { padding-top: 20px; }
.g-low { padding-top: 38px; }
.g-rain { padding-top: 25px; }
.rule { font-size: 27px; }
.dot-small { margin-top: 1px; }

.home { height: 396px; padding-top: 19px; }
.i-house { margin: 0 11px 0 4px; }
.home .aqi { margin-top: 22px; height: 135px; }
.home .reading-box { width: 368px; padding-top: 13px; letter-spacing: -.25px; }
.home em { margin: 46px 0 0 17px; width: 76px; }
.who { width: 161px; padding-left: 15px; border-left: 1px solid #c4c4c8; font-size: 22px; text-align: center; white-space: nowrap; letter-spacing: .1px; }
.who p { line-height: 27px; height: 27px; margin-left: -5px; margin-right: -5px; }
.home .gauges { margin-top: 14px; }

.city { height: 517px; padding-top: 25px; }
.i-arrow { margin: 0 9px 0 2px; }
.city .aqi { margin-top: 11px; height: 152px; }
.city .reading-box { width: 371px; padding-top: 24px; letter-spacing: -.1px; }
.city em { margin: 56px 0 0 17px; width: 77px; }
.windbox { height: 147px; margin-top: 5px; padding-left: 11px; border-left: 1px solid #c4c4c8; }
.windbox .gauge { margin-top: -5px; }
.city .gauges { margin-top: 12px; }
.source { width: 622px; margin-top: 17px; text-align: right; font-size: 23px; line-height: 27px; letter-spacing: -.37px; white-space: nowrap; }
.source span { letter-spacing: -.4px; }

.forecast { height: 419px; padding-top: 26px; }
.i-bino { margin: 0 12px 0 3px; }
.t-fore .sc { letter-spacing: -.5px; }
.dotted { margin-left: 8px; }
.forecast .gauges { margin-top: 15px; }
.forecast .second { margin-top: 14px; }

.grid-power { height: 155px; padding-top: 12px; }
.i-bolt { margin: 0 11px 0 4px; }
.carbon { margin-top: 20px; }
.i-zap { margin: 0 13px 0 7px; }
.t-co2 { letter-spacing: -.9px; }
.grid-power .meter { width: 622px; }

.traffic { padding-top: 25px; }
.i-cars { margin: 0 11px 0 4px; }
```
